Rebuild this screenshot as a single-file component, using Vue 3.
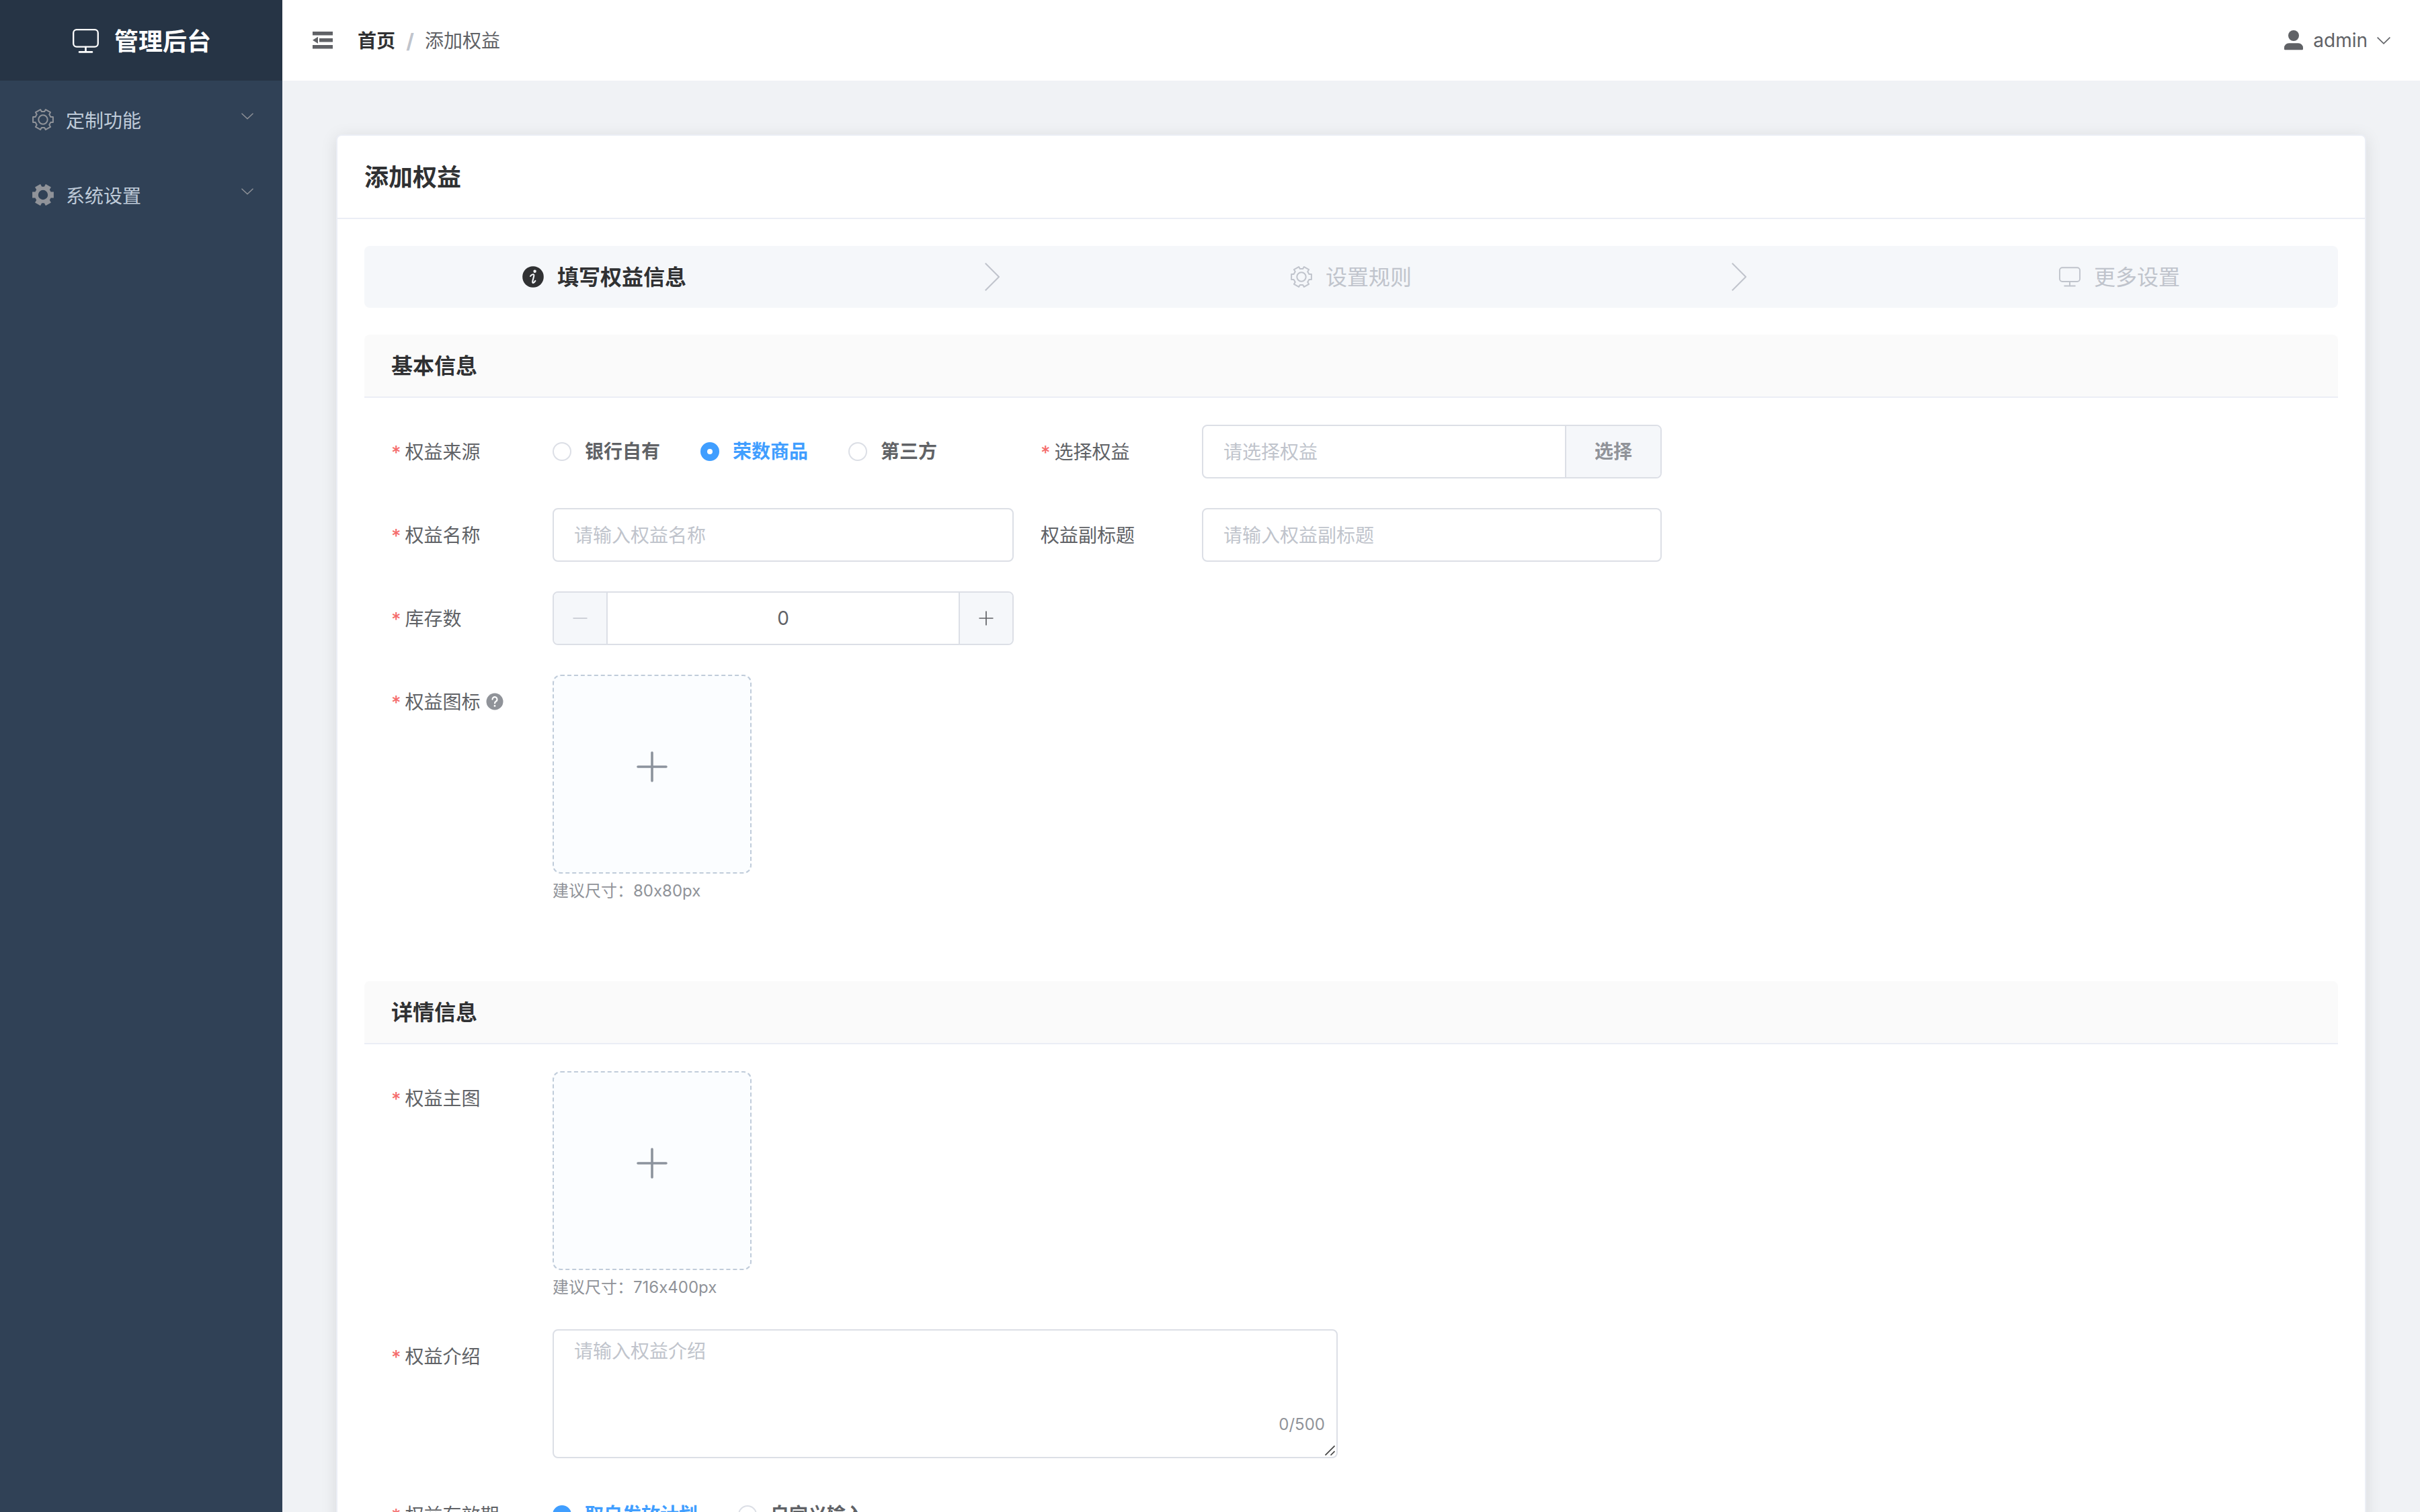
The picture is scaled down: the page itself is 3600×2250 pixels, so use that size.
<script setup>
const gearPath = (inner, outer, half) => {
  const pts = []
  for (let i = 0; i < 6; i++) {
    const a = (i * Math.PI) / 3
    for (const [x, y] of [[inner, -half], [outer, -half], [outer, half], [inner, half]]) {
      const px = 16 + x * Math.cos(a) - y * Math.sin(a)
      const py = 16 + x * Math.sin(a) + y * Math.cos(a)
      pts.push(`${px.toFixed(2)} ${py.toFixed(2)}`)
    }
  }
  return `M${pts.join('L')}Z`
}
const gearOutline = gearPath(11.4, 14.9, 4.1)
const gearSolid = gearPath(11.6, 15.9, 4.6) + 'M16 8.8a7.2 7.2 0 1 0 0 14.4a7.2 7.2 0 1 0 0-14.4Z'

const menu = [
  { label: '定制功能', solid: false },
  { label: '系统设置', solid: true },
]
const sources = [
  { label: '银行自有', checked: false },
  { label: '荣数商品', checked: true },
  { label: '第三方', checked: false },
]
const periods = [
  { label: '取自发放计划', checked: true },
  { label: '自定义输入', checked: false },
]
</script>

<template>
  <div class="app">
    <aside class="sidebar">
      <div class="logo">
        <svg class="logo-icon" viewBox="0 0 39 36" fill="none" stroke="currentColor" stroke-linecap="round">
          <rect x="1.2" y="1.2" width="36.6" height="25.4" rx="4.8" stroke-width="2.3" />
          <path d="M19.5 27v6.5M10 34.4h19" stroke-width="2.6" />
        </svg>
        <span>管理后台</span>
      </div>
      <nav>
        <div v-for="m in menu" :key="m.label" class="menu-item">
          <svg class="menu-icon" viewBox="0 0 32 32">
            <path v-if="m.solid" :d="gearSolid" fill="currentColor" fill-rule="evenodd" />
            <g v-else fill="none" stroke="currentColor" stroke-width="2" stroke-linejoin="round">
              <path :d="gearOutline" />
              <circle cx="16" cy="16" r="6.7" />
            </g>
          </svg>
          <span class="menu-label">{{ m.label }}</span>
          <svg class="menu-arrow" viewBox="0 0 18 10" fill="none" stroke="currentColor" stroke-width="1.4">
            <path d="M.5 .7L9 8.8L17.5 .7" />
          </svg>
        </div>
      </nav>
    </aside>

    <div class="main">
      <header class="topbar">
        <svg class="fold" viewBox="0 0 30 28" fill="currentColor">
          <path d="M0 1h30v5.6H0zM10 11h20v5.6H10zM0 21h30v5.6H0zM0 13.8L8 8.8v10z" />
        </svg>
        <div class="crumbs">
          <b>首页</b><i>/</i><span>添加权益</span>
        </div>
        <div class="user">
          <svg class="user-icon" viewBox="0 0 28 30" fill="currentColor">
            <circle cx="14" cy="8" r="8" />
            <path d="M7 19.3h14a7 7 0 0 1 7 7v1.6a1.4 1.4 0 0 1-1.4 1.4H1.4A1.4 1.4 0 0 1 0 27.9v-1.6a7 7 0 0 1 7-7z" />
          </svg>
          <span>admin</span>
          <svg class="user-arrow" viewBox="0 0 20 11" fill="none" stroke="currentColor" stroke-width="1.6">
            <path d="M.6 .6L10 9.8L19.4 .6" />
          </svg>
        </div>
      </header>

      <div class="content">
        <section class="card">
          <div class="card-head">添加权益</div>
          <div class="card-body">
            <div class="steps">
              <div class="step active">
                <svg class="step-icon" viewBox="0 0 32 32">
                  <circle cx="16" cy="16" r="15.8" fill="currentColor" />
                  <circle cx="18.6" cy="7.8" r="2.2" fill="#f5f7fa" />
                  <path d="M12 15c1.6-2.200 4-3.200 5-2.500c.8.6.2 2.500-.3 4.500l-1.300 5c-.4 1.900-.2 3.200.9 2.900c1.100-.3 2.200-1.600 3.100-3" fill="none" stroke="#f5f7fa" stroke-width="2.100" stroke-linecap="round" />
                </svg>
                <span>填写权益信息</span>
                <div class="step-arrow">
                  <svg viewBox="0 0 22 42" fill="none" stroke="currentColor" stroke-width="2"><path d="M.8 .8L21 21L.8 41.2" /></svg>
                </div>
              </div>
              <div class="step">
                <svg class="step-icon" viewBox="0 0 32 32" fill="none" stroke="currentColor" stroke-width="2" stroke-linejoin="round">
                  <path :d="gearOutline" />
                  <circle cx="16" cy="16" r="6.7" />
                </svg>
                <span>设置规则</span>
                <div class="step-arrow">
                  <svg viewBox="0 0 22 42" fill="none" stroke="currentColor" stroke-width="2"><path d="M.8 .8L21 21L.8 41.2" /></svg>
                </div>
              </div>
              <div class="step last">
                <svg class="step-icon" viewBox="0 0 39 36" fill="none" stroke="currentColor" stroke-linecap="round">
                  <rect x="1.2" y="1.2" width="36.6" height="25.4" rx="4.8" stroke-width="2.3" />
                  <path d="M19.5 27v6.5M10 34.4h19" stroke-width="2.4" />
                </svg>
                <span>更多设置</span>
              </div>
            </div>

            <div class="section-head">基本信息</div>
            <div class="section-body">
              <div class="grid">
                <div class="item">
                  <label class="req">权益来源</label>
                  <div class="radios">
                    <span v-for="s in sources" :key="s.label" class="radio" :class="{ checked: s.checked }"><i />{{ s.label }}</span>
                  </div>
                </div>
                <div class="item">
                  <label class="req">选择权益</label>
                  <div class="field group">
                    <input placeholder="请选择权益" />
                    <button>选择</button>
                  </div>
                </div>
              </div>
              <div class="grid">
                <div class="item">
                  <label class="req">权益名称</label>
                  <div class="field"><input placeholder="请输入权益名称" /></div>
                </div>
                <div class="item">
                  <label>权益副标题</label>
                  <div class="field"><input placeholder="请输入权益副标题" /></div>
                </div>
              </div>
              <div class="grid">
                <div class="item">
                  <label class="req">库存数</label>
                  <div class="field number">
                    <span class="num-btn disabled">
                      <svg viewBox="0 0 22 22" stroke="currentColor" stroke-width="1.7"><path d="M.5 11h21" /></svg>
                    </span>
                    <span class="num-val">0</span>
                    <span class="num-btn inc">
                      <svg viewBox="0 0 22 22" stroke="currentColor" stroke-width="1.7"><path d="M.5 11h21M11 .5v21" /></svg>
                    </span>
                  </div>
                </div>
              </div>
              <div class="item">
                <label class="req">权益图标
                  <svg class="help" viewBox="0 0 26 26">
                    <circle cx="13" cy="13" r="12.5" fill="#909399" />
                    <path d="M9.5 9.7a3.5 3.5 0 1 1 5.7 2.7c-1.4 1.1-2.2 1.6-2.2 3.1" fill="none" stroke="#fff" stroke-width="2.2" stroke-linecap="round" />
                    <circle cx="13" cy="19.4" r="1.4" fill="#fff" />
                  </svg>
                </label>
                <div>
                  <div class="upload">
                    <svg viewBox="0 0 46 46" stroke="currentColor" stroke-width="3.6" stroke-linecap="round"><path d="M2 23h42M23 2v42" /></svg>
                  </div>
                  <div class="hint">建议尺寸：80x80px</div>
                </div>
              </div>
            </div>

            <div class="section-head">详情信息</div>
            <div class="section-body">
              <div class="item">
                <label class="req">权益主图</label>
                <div>
                  <div class="upload">
                    <svg viewBox="0 0 46 46" stroke="currentColor" stroke-width="3.6" stroke-linecap="round"><path d="M2 23h42M23 2v42" /></svg>
                  </div>
                  <div class="hint">建议尺寸：716x400px</div>
                </div>
              </div>
              <div class="item half">
                <label class="req">权益介绍</label>
                <div class="area">
                  <textarea placeholder="请输入权益介绍" />
                  <span class="count">0/500</span>
                  <svg class="grip" viewBox="0 0 15 15" stroke="#444" stroke-width="1.7"><path d="M.5 14.5L14.5 .5M8.5 14.5L14.5 8.5" /></svg>
                </div>
              </div>
              <div class="item">
                <label class="req">权益有效期</label>
                <div class="radios">
                  <span v-for="p in periods" :key="p.label" class="radio" :class="{ checked: p.checked }"><i />{{ p.label }}</span>
                </div>
              </div>
            </div>
          </div>
        </section>
      </div>
    </div>
  </div>
</template>

<style>
html,
body {
  margin: 0;
  overflow: hidden;
}
</style>

<style scoped>
.app,
.app * {
  box-sizing: border-box;
}
.app {
  display: flex;
  width: 3600px;
  height: 2250px;
  overflow: hidden;
  font-family: Inter, "Noto Sans CJK SC", sans-serif;
  font-size: 28px;
  line-height: 42px;
  color: #606266;
}
.app svg {
  display: block;
  flex: none;
}
.sidebar {
  flex: none;
  width: 420px;
  background: #304156;
}
.logo {
  display: flex;
  align-items: center;
  height: 120px;
  padding-left: 108px;
  padding-top: 2px;
  background: #263445;
  color: #fff;
  font-size: 36px;
  font-weight: 700;
}
.logo span {
  padding-top: 2px;
}
.logo-icon {
  width: 39px;
  height: 36px;
  margin-right: 23px;
}
.menu-item {
  display: flex;
  align-items: center;
  height: 112px;
  padding: 4px 43px 0 48px;
  color: #bfcbd9;
}
.menu-label {
  padding-top: 3px;
}
.menu-icon {
  width: 32px;
  height: 32px;
  margin-right: 18px;
  color: #909399;
}
.menu-arrow {
  width: 18px;
  height: 10px;
  margin-left: auto;
  margin-top: -10px;
  color: #909399;
}
.main {
  flex: 1;
  display: flex;
  flex-direction: column;
  min-width: 0;
  background: #f0f2f5;
}
.topbar {
  flex: none;
  display: flex;
  align-items: center;
  height: 120px;
  padding: 0 44px 0 45px;
  background: #fff;
}
.fold {
  width: 30px;
  height: 28px;
  margin-right: 37px;
}
.crumbs {
  display: flex;
  padding-top: 2px;
}
.crumbs b {
  color: #303133;
  font-weight: 700;
}
.crumbs i {
  width: 44px;
  text-align: center;
  color: #c0c4cc;
  font-size: 30px;
  font-style: normal;
  font-weight: 700;
}
.user {
  display: flex;
  align-items: center;
  margin-left: auto;
}
.user-icon {
  width: 28px;
  height: 30px;
  margin-right: 15px;
}
.user-arrow {
  width: 20px;
  height: 11px;
  margin-left: 14px;
}
.content {
  flex: 1;
  padding: 80px 80px 0;
}
.card {
  height: 2400px;
  border: 2px solid #ebeef5;
  border-radius: 8px;
  background: #fff;
  box-shadow: 0 4px 24px rgba(0, 0, 0, 0.1);
}
.card-head {
  height: 124px;
  padding: 0 40px;
  border-bottom: 2px solid #ebeef5;
  line-height: 124px;
  font-size: 36px;
  font-weight: 600;
  color: #303133;
}
.card-body {
  padding: 40px;
}
.steps {
  display: flex;
  align-items: center;
  height: 92px;
  padding: 0 235px;
  margin-bottom: 40px;
  border-radius: 8px;
  background: #f5f7fa;
}
.step {
  flex: 1;
  display: flex;
  align-items: center;
  font-size: 32px;
  color: #c0c4cc;
}
.step > span {
  padding-top: 2px;
}
.step.active {
  color: #303133;
  font-weight: 700;
}
.step.last {
  flex: none;
}
.step-icon {
  width: 32px;
  height: 32px;
  margin-right: 20px;
}
.step-arrow {
  flex: 1;
  display: flex;
  justify-content: center;
  padding-left: 10px;
  color: #c0c4cc;
}
.step-arrow svg {
  width: 22px;
  height: 42px;
}
.section-head {
  height: 94px;
  padding: 0 40px;
  border-bottom: 2px solid #ebeef5;
  border-radius: 8px 8px 0 0;
  background: #fafafa;
  line-height: 94px;
  font-size: 32px;
  font-weight: 700;
  color: #303133;
}
.section-body {
  padding: 40px 40px 116px;
  display: flex;
  flex-direction: column;
  gap: 44px;
}
.grid {
  display: grid;
  grid-template-columns: 926px 924px;
  gap: 40px;
}
.item {
  display: flex;
}
.item > :last-child {
  flex: 1;
}
.item label {
  display: flex;
  align-items: center;
  flex: none;
  width: 240px;
  height: 80px;
  padding-top: 1px;
}
.req::before {
  content: "*";
  margin-right: 6px;
  padding-top: 3px;
  color: #f56c6c;
  font-weight: 500;
}
.help {
  width: 26px;
  height: 26px;
  margin-left: 8px;
  margin-top: -2px;
}
.half {
  width: 1408px;
}
.radios {
  display: flex;
  align-items: center;
  gap: 60px;
  height: 80px;
  font-weight: 600;
}
.radio {
  display: flex;
  align-items: center;
}
.radio i {
  width: 28px;
  height: 28px;
  margin-right: 20px;
  border: 2px solid #dcdfe6;
  border-radius: 50%;
  background: #fff;
}
.radio.checked {
  color: #409eff;
}
.radio.checked i {
  border: 10px solid #409eff;
}
.field {
  display: flex;
  height: 80px;
  border: 2px solid #dcdfe6;
  border-radius: 8px;
  overflow: hidden;
}
input,
textarea {
  flex: 1;
  min-width: 0;
  border: 0;
  outline: 0;
  padding: 2px 30px 0;
  background: none;
  font: inherit;
  color: #606266;
}
input::placeholder,
textarea::placeholder {
  color: #c0c4cc;
  opacity: 1;
}
.group button {
  flex: none;
  width: 142px;
  border: 0;
  border-left: 2px solid #dcdfe6;
  padding: 0;
  background: #f5f7fa;
  color: #909399;
  font: inherit;
  font-weight: 600;
}
.num-btn {
  flex: none;
  display: flex;
  align-items: center;
  justify-content: center;
  width: 80px;
  border-right: 2px solid #dcdfe6;
  background: #f5f7fa;
}
.num-btn.inc {
  border-right: 0;
  border-left: 2px solid #dcdfe6;
}
.num-btn.disabled {
  color: #c0c4cc;
}
.num-btn svg {
  width: 22px;
  height: 22px;
}
.num-val {
  flex: 1;
  text-align: center;
  line-height: 77px;
}
.upload {
  display: flex;
  justify-content: center;
  width: 296px;
  height: 296px;
  padding-top: 112px;
  border: 2px dashed #c0ccda;
  border-radius: 12px;
  background: #fbfdff;
  color: #8c939d;
}
.upload svg {
  width: 46px;
  height: 46px;
}
.hint {
  height: 44px;
  line-height: 52px;
  font-size: 24px;
  color: #909399;
}
.area {
  position: relative;
  display: flex;
  height: 192px;
  border: 2px solid #dcdfe6;
  border-radius: 8px;
}
textarea {
  padding: 10px 30px;
  line-height: 42px;
  resize: none;
}
.count {
  position: absolute;
  right: 17px;
  bottom: 29px;
  line-height: 38px;
  font-size: 24px;
  color: #909399;
}
.grip {
  position: absolute;
  right: 2px;
  bottom: 2px;
  width: 15px;
  height: 15px;
}
</style>
